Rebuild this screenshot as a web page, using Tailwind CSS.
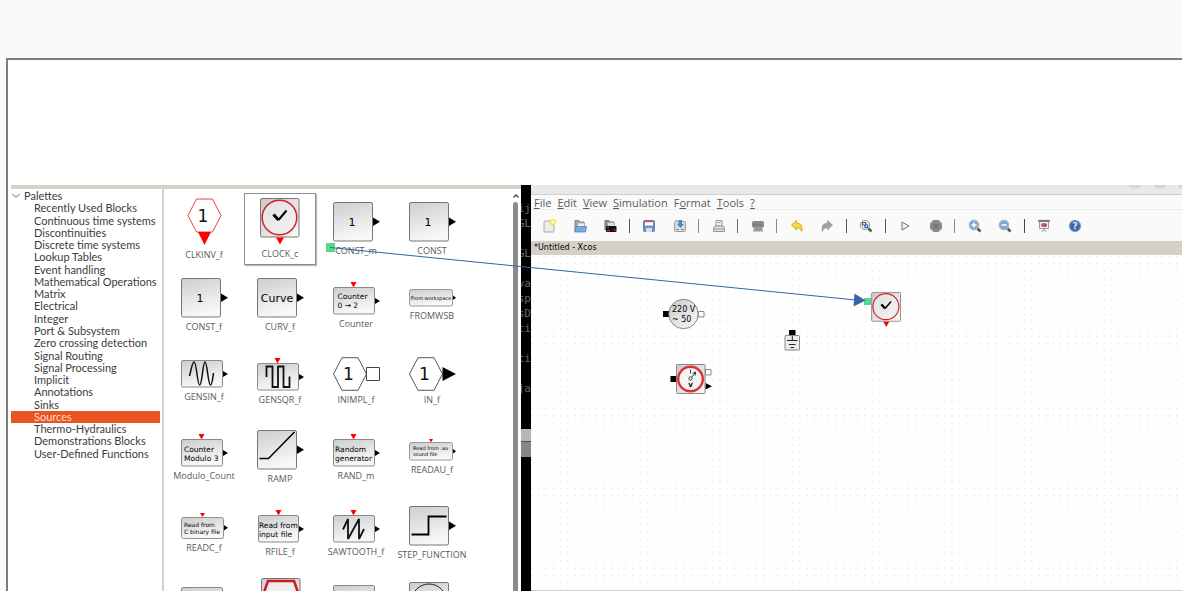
<!DOCTYPE html>
<html lang="en">
<head>
<meta charset="utf-8">
<title>Xcos</title>
<script src="https://cdn.jsdelivr.net/npm/@tailwindcss/browser@4"></script>
</head>
<body class="h-screen overflow-hidden bg-[#fafafa] pt-[58px] pl-[6px] font-['Open_Sans','Noto_Sans',sans-serif] text-[#3c3c3c]">

<!-- Shared paint and shapes -->
<svg class="absolute size-0" aria-hidden="true">
  <defs>
    <linearGradient id="face" x1="0" y1="0" x2="1" y2="1"><stop offset="0" stop-color="#c9c9c9"/><stop offset="1" stop-color="#fafafa"/></linearGradient>
    <linearGradient id="faceV" x1="0" y1="0" x2="0.3" y2="1"><stop offset="0" stop-color="#cdcdcd"/><stop offset="1" stop-color="#f8f8f8"/></linearGradient>
    <pattern id="dots" width="7.25" height="7.25" patternUnits="userSpaceOnUse"><rect x="0" y="1" width="1" height="1" fill="#dadada"/></pattern>
    <g id="box"><rect x="1.5" y=".5" width="39" height="38.5" rx="1.5" fill="url(#faceV)" stroke="#777"/><path d="M41 15.500l7 4.200-7 4.200z"/></g>
    <g id="low"><rect x="1.500" y=".5" width="41" height="26.500" rx="1.500" fill="url(#faceV)" stroke="#8a8a8a"/><path d="M43 11l5 3-5 3z"/></g>
    <path id="ev" d="M18.500 0h6l-3 5.500z" fill="#f00"/>
    <g id="clock"><rect x="1.500" y=".5" width="38.500" height="38.500" rx="1.500" fill="url(#face)" stroke="#777"/><circle cx="20.500" cy="19.500" r="17.300" fill="#f0f0f0" fill-opacity=".6" stroke="#d4202a" stroke-width="1.500"/><path d="M14.500 16.500l5 5.500" fill="none" stroke="#000" stroke-width="3"/><path d="M19.500 22l8-9.500" fill="none" stroke="#000" stroke-width="2"/><path d="M17 39.500h8l-4 7z" fill="#f00"/></g>
  </defs>
</svg>

<main class="relative flex h-full flex-col border-t-2 border-l-2 border-[#7d7d7d] bg-white pt-[125px] pl-[3px]">
  <div class="flex min-h-0 flex-1">

    <!-- Palette browser -->
    <section class="flex w-[510px] shrink-0 flex-col border-t-4 border-[#d6d0c8]">
      <div class="flex min-h-0 flex-1">
        <nav class="w-[153px] shrink-0 border-r-2 border-[#d2d2d2] pt-px font-['Lato','Noto_Sans',sans-serif] text-[11px] leading-[12px] whitespace-nowrap" aria-label="Palettes">
          <ul class="grid h-[270px] auto-rows-fr grid-cols-[minmax(0,1fr)]">
            <li class="flex items-center gap-[4px] pl-px"><svg class="h-[12px] w-[8px]" viewBox="0 0 8 12" fill="none" stroke="#666"><path d="M.5 4L4 7.500 7.500 4"/></svg><a href="#">Palettes</a></li>
            <li><a href="#" class="block pl-[23px]">Recently Used Blocks</a></li>
            <li><a href="#" class="block pl-[23px]">Continuous time systems</a></li>
            <li><a href="#" class="block pl-[23px]">Discontinuities</a></li>
            <li><a href="#" class="block pl-[23px]">Discrete time systems</a></li>
            <li><a href="#" class="block pl-[23px]">Lookup Tables</a></li>
            <li><a href="#" class="block pl-[23px]">Event handling</a></li>
            <li><a href="#" class="block pl-[23px]">Mathematical Operations</a></li>
            <li><a href="#" class="block pl-[23px]">Matrix</a></li>
            <li><a href="#" class="block pl-[23px]">Electrical</a></li>
            <li><a href="#" class="block pl-[23px]">Integer</a></li>
            <li><a href="#" class="block pl-[23px]">Port &amp; Subsystem</a></li>
            <li><a href="#" class="block pl-[23px]">Zero crossing detection</a></li>
            <li><a href="#" class="block pl-[23px]">Signal Routing</a></li>
            <li><a href="#" class="block pl-[23px]">Signal Processing</a></li>
            <li><a href="#" class="block pl-[23px]">Implicit</a></li>
            <li><a href="#" class="block pl-[23px]">Annotations</a></li>
            <li><a href="#" class="block pl-[23px]">Sinks</a></li>
            <li class="mr-[2px] bg-[#e95420] text-[#fbdcd0]"><a href="#" class="block pl-[23px]">Sources</a></li>
            <li><a href="#" class="block pl-[23px]">Thermo-Hydraulics</a></li>
            <li><a href="#" class="block pl-[23px]">Demonstrations Blocks</a></li>
            <li><a href="#" class="block pl-[23px]">User-Defined Functions</a></li>
          </ul>
        </nav>

        <div class="min-w-0 flex-1 overflow-hidden pt-[3px] pl-[2px]">
          <div class="grid auto-rows-[76px] grid-cols-[repeat(4,76px)] text-[9px] leading-[14px] text-[#5a5a5a]">
            <button class="flex flex-col items-center justify-center gap-[2px]"><svg class="h-[48px] w-[48px]" font-family="DejaVu Sans"><path d="M8 17.500L16.500 1h16L41 17.500 32.500 34h-16z" fill="#fff" stroke="#e8434a"/><path d="M18 34h13l-6.500 13z" fill="#f00"/><text x="17.500" y="24" font-size="17" fill="#111">1</text></svg><span>CLKINV_f</span></button>
            <button class="mx-[2px] mt-px mb-[3px] flex flex-col items-center justify-center gap-[3px] border border-[#8e8e8e] pt-px shadow-[1px_1px_1px_#bbb]"><svg class="h-[46px] w-[48px]"><g transform="translate(3)"><use href="#clock"/></g></svg><span>CLOCK_c</span></button>
            <button class="flex flex-col items-center justify-center gap-[2px]"><svg class="h-[40px] w-[48px]" font-family="DejaVu Sans"><use href="#box"/><text x="16.500" y="23.500" font-size="11">1</text></svg><span>CONST_m</span></button>
            <button class="flex flex-col items-center justify-center gap-[2px]"><svg class="h-[40px] w-[48px]" font-family="DejaVu Sans"><use href="#box"/><text x="16.500" y="23.500" font-size="11">1</text></svg><span>CONST</span></button>

            <button class="flex flex-col items-center justify-center gap-[2px]"><svg class="h-[40px] w-[48px]" font-family="DejaVu Sans"><use href="#box"/><text x="16.500" y="23.500" font-size="11">1</text></svg><span>CONST_f</span></button>
            <button class="flex flex-col items-center justify-center gap-[2px]"><svg class="h-[40px] w-[48px]" font-family="DejaVu Sans"><use href="#box"/><text x="21" y="23.500" font-size="11" text-anchor="middle">Curve</text></svg><span>CURV_f</span></button>
            <button class="flex flex-col items-center justify-center gap-[2px]"><svg class="h-[33px] w-[48px]" font-family="DejaVu Sans" font-size="7.500"><use href="#ev"/><use href="#low" y="5"/><text x="5.500" y="17">Counter</text><text x="5.500" y="26">0 → 2</text></svg><span>Counter</span></button>
            <button class="flex flex-col items-center justify-center gap-[2px]"><svg class="h-[18px] w-[48px]" font-family="DejaVu Sans" font-size="5"><rect x="1.500" y=".5" width="43" height="16.500" rx="2" fill="url(#faceV)" stroke="#9a9a9a"/><path d="M45 6.500l3 2.200-3 2.200z"/><text x="23" y="10.500" text-anchor="middle">From workspace</text></svg><span>FROMWSB</span></button>

            <button class="flex flex-col items-center justify-center gap-[2px]"><svg class="h-[28px] w-[48px]"><use href="#low"/><path d="M9.500 16C12 6 12.500 2 14 2c2.800 0 3.200 23 5.700 23s3-23 5.300-23 3 23 5.500 23c1.500 0 2-5 3-12" fill="none" stroke="#111" stroke-width="1.500"/></svg><span>GENSIN_f</span></button>
            <button class="flex flex-col items-center justify-center gap-[2px]"><svg class="h-[33px] w-[48px]"><use href="#ev"/><use href="#low" y="5"/><path d="M10.500 19V8.500h6V29h5.500V8.500h5.500V29h6V18.500" fill="none" stroke="#111" stroke-width="1.800"/></svg><span>GENSQR_f</span></button>
            <button class="flex flex-col items-center justify-center gap-[2px]"><svg class="h-[34px] w-[48px]" font-family="DejaVu Sans"><path d="M1.500 17L10 .7h16L34.500 17 26 33.300H10z" fill="#fff" stroke="#555"/><path d="M34.500 10.500h13v13h-13z" fill="#fff" stroke="#444"/><text x="11" y="23" font-size="17" fill="#111">1</text></svg><span>INIMPL_f</span></button>
            <button class="flex flex-col items-center justify-center gap-[2px]"><svg class="h-[34px] w-[48px]" font-family="DejaVu Sans"><path d="M1.500 17L10 .7h16L34.500 17 26 33.300H10z" fill="#fff" stroke="#555"/><path d="M34.500 10l13.500 7-13.500 7z"/><text x="11" y="23" font-size="17" fill="#111">1</text></svg><span>IN_f</span></button>

            <button class="flex flex-col items-center justify-center gap-[2px]"><svg class="h-[33px] w-[48px]" font-family="DejaVu Sans" font-size="7.500"><use href="#ev"/><use href="#low" y="5"/><text x="4" y="17.500">Counter</text><text x="4" y="26.500">Modulo 3</text></svg><span>Modulo_Count</span></button>
            <button class="flex flex-col items-center justify-center gap-[2px]"><svg class="h-[40px] w-[48px]"><use href="#box"/><path d="M3.500 28.500h9L38.500 2" fill="none" stroke="#000" stroke-width="1.500"/></svg><span>RAMP</span></button>
            <button class="flex flex-col items-center justify-center gap-[2px]"><svg class="h-[33px] w-[48px]" font-family="DejaVu Sans" font-size="7.500"><use href="#ev"/><use href="#low" y="5"/><text x="3" y="17.500">Random</text><text x="3" y="26.500">generator</text></svg><span>RAND_m</span></button>
            <button class="flex flex-col items-center justify-center gap-[2px]"><svg class="h-[22px] w-[48px]" font-family="DejaVu Sans" font-size="5"><path d="M21 0h4l-2 3.500z" fill="#f00"/><rect x="1.500" y="3.500" width="43" height="17.500" rx="2" fill="url(#faceV)" stroke="#9a9a9a"/><path d="M45 10l3 2.200-3 2.200z"/><text x="5" y="11">Read from .au</text><text x="5" y="17">sound file</text></svg><span>READAU_f</span></button>

            <button class="flex flex-col items-center justify-center gap-[2px]"><svg class="h-[26px] w-[48px]" font-family="DejaVu Sans" font-size="6"><path d="M20 0h5l-2.500 4z" fill="#f00"/><rect x="1.500" y="4.500" width="42" height="21" rx="2" fill="url(#faceV)" stroke="#8f8f8f"/><path d="M44 12l4 2.800-4 2.800z"/><text x="4" y="13.500">Read from</text><text x="4" y="21">C binary file</text></svg><span>READC_f</span></button>
            <button class="flex flex-col items-center justify-center gap-[2px]"><svg class="h-[33px] w-[48px]" font-family="DejaVu Sans" font-size="7.500"><use href="#ev" x="1"/><rect x="2.500" y="5.500" width="40" height="26.500" rx="1.500" fill="url(#faceV)" stroke="#8a8a8a"/><path d="M43 16l5 3-5 3z"/><text x="3" y="17.500">Read from</text><text x="3" y="26.500">input file</text></svg><span>RFILE_f</span></button>
            <button class="flex flex-col items-center justify-center gap-[2px]"><svg class="h-[33px] w-[48px]"><use href="#ev"/><use href="#low" y="5"/><path d="M11 19.500L16 9v20L27 9v20l5-10" fill="none" stroke="#111" stroke-width="1.800"/></svg><span>SAWTOOTH_f</span></button>
            <button class="flex flex-col items-center justify-center gap-[2px]"><svg class="h-[40px] w-[48px]"><use href="#box"/><path d="M3.500 28.500h17v-18h18" fill="none" stroke="#000" stroke-width="1.800"/></svg><span>STEP_FUNCTION</span></button>

            <button class="flex justify-center pt-[15px]" aria-label="Block"><svg class="h-[28px] w-[48px]"><use href="#low"/></svg></button>
            <button class="flex justify-center pt-[6px]" aria-label="Clock block"><svg class="h-[48px] w-[48px]"><g transform="translate(4)"><rect x="1.500" y=".5" width="38.500" height="38.500" rx="1.500" fill="url(#faceV)" stroke="#777"/><path d="M2 20L8 3h26l6 17" fill="#eee" stroke="#cc1a22" stroke-width="2.500"/></g></svg></button>
            <button class="flex justify-center pt-[13px]" aria-label="Block"><svg class="h-[33px] w-[48px]"><use href="#low"/></svg></button>
            <button class="flex justify-center pt-[10px]" aria-label="Time block"><svg class="h-[40px] w-[48px]"><use href="#box"/><circle cx="21" cy="19.500" r="17.500" fill="none" stroke="#222"/></svg></button>
          </div>
        </div>

        <div class="flex w-[11px] shrink-0 flex-col items-center gap-[3px] pt-[4px]">
          <svg class="h-[6px] w-[8px] shrink-0" viewBox="0 0 8 6" fill="none" stroke="#444" stroke-width="1.300"><path d="M1.500 4.500L4 2l2.500 2.500"/></svg>
          <div class="w-[5px] flex-1 rounded-t bg-[#8a8a8a]"></div>
        </div>
      </div>
    </section>

    <!-- Sliver of the terminal behind -->
    <section class="w-[10px] shrink-0 overflow-hidden bg-black pt-[16px] font-['DejaVu_Sans_Mono',monospace] text-[11px] leading-[15px] text-[#686868]">
      <div class="flex h-[228px] flex-col items-end">
        <p>ij</p><p>GL</p><p class="mt-[15px]">GL</p><p class="mt-[15px]">va</p><p>sp</p><p>sD</p><p>ti</p><p class="mt-[15px]">ti</p><p class="mt-[15px]">ja</p>
      </div>
      <div class="h-[13px] border-b border-[#555] bg-[#b9b6b9]"></div>
      <div class="h-[15px] bg-[#878787]"></div>
    </section>

    <!-- Diagram editor -->
    <section class="flex min-w-0 flex-1 flex-col">
      <header class="flex h-[10px] shrink-0 justify-end gap-[9px] overflow-hidden border-b border-[#cfcfcf] bg-[#e9e9e9]">
        <i class="-mt-[12px] size-[16px] rounded-full bg-[#d6d6d6]"></i><i class="-mt-[12px] size-[16px] rounded-full bg-[#d6d6d6]"></i><i class="-mt-[12px] -mr-[11px] size-[16px] rounded-full bg-[#d6d6d6]"></i>
      </header>
      <nav class="flex h-[15px] shrink-0 items-center gap-[6px] border-b border-[#ececec] bg-[#fafafa] pt-[2px] pl-[3px] text-[11px] leading-[14px] text-[#5a5a5a]">
        <button><u>F</u>ile</button><button><u>E</u>dit</button><button><u>V</u>iew</button><button><u>S</u>imulation</button><button>F<u>o</u>rmat</button><button><u>T</u>ools</button><button><u>?</u></button>
      </nav>
      <div class="h-[31px] shrink-0 overflow-hidden bg-[#fafafa] pl-[3px]">
        <div class="flex h-full w-[556px] items-center justify-between">
          <button class="flex w-[30px] justify-center" aria-label="New"><svg class="size-[14px]" viewBox="0 0 14 14"><rect x="2" y="2" width="10" height="11" rx="1" fill="#ededed" stroke="#aaa"/><circle cx="11" cy="3" r="2.500" fill="#fffbd0" stroke="#f2e43c" stroke-width="1.300"/></svg></button>
          <button class="flex w-[30px] justify-center" aria-label="Open"><svg class="size-[14px]" viewBox="0 0 14 14"><path d="M2 11V1.500h4l1 1.500h4v8z" fill="#a5a7a5" stroke="#888"/><path d="M4.500 4h7v5h-7z" fill="#eee" stroke="#999" stroke-width=".6"/><path d="M3 7.500h10.500L12.500 13H1.500z" fill="#7fa9dc" stroke="#5180bb" stroke-width=".8"/></svg></button>
          <button class="flex w-[30px] justify-center" aria-label="Open in Scilab"><svg class="size-[14px]" viewBox="0 0 14 14"><path d="M2 11V1.500h4l1 1.500h4v8z" fill="#8d8f8d" stroke="#777"/><path d="M4.500 3.500h7v4h-7z" fill="#ddd" stroke="#999" stroke-width=".6"/><rect x="3" y="7" width="10.500" height="6" rx="1" fill="#111"/><path d="M4 11.500h3M10.500 11h2" stroke="#d82020" stroke-width="1.500"/><path d="M4 8.500h2" stroke="#3358d8"/></svg></button>
          <i class="mr-[4px] ml-[3px] h-[14px] w-px bg-[#555]"></i>
          <button class="flex w-[30px] justify-center" aria-label="Save"><svg class="size-[14px]" viewBox="0 0 14 14"><rect x="1.500" y="1.500" width="11" height="11" rx="1" fill="#6d92c4" stroke="#5f7fa8"/><path d="M3 2h8v4.500H3z" fill="#fff"/><path d="M3 2.500h8" stroke="#dc5050" stroke-width="1.500"/><path d="M4 9h6v4H4z" fill="#d9dce0"/></svg></button>
          <button class="flex w-[30px] justify-center" aria-label="Save as"><svg class="size-[14px]" viewBox="0 0 14 14"><rect x="1.500" y="2.500" width="11" height="10" rx="1" fill="#ddd" stroke="#999"/><path d="M3 10.500h3M8 10.500h3" stroke="#888"/><path d="M5.500 1h3.500v4h2L7.500 9 4 5h1.500z" fill="#4d86b8"/><path d="M2 2h3" stroke="#a5bdd2" stroke-width="2"/></svg></button>
          <i class="mr-[4px] ml-[3px] h-[14px] w-px bg-[#888]"></i>
          <button class="flex w-[30px] justify-center" aria-label="Print"><svg class="size-[14px]" viewBox="0 0 14 14" fill="#eee" stroke="#999"><path d="M4 1.500h6V7H4z"/><path d="M2.500 7h9l1 2.500v3h-11v-3z" fill="#ddd"/><path d="M2 10h10M5.500 3.500h3"/></svg></button>
          <i class="mr-[4px] ml-[3px] h-[14px] w-px bg-[#666]"></i>
          <button class="flex w-[30px] justify-center" aria-label="Delete"><svg class="size-[14px]" viewBox="0 0 14 14"><rect x="1" y="2" width="12" height="6.500" rx="1.500" fill="#8b8b8b"/><path d="M3 8h8l1 5-2-1-1 1-2-1-2 1-1-1-2 1z" fill="#999"/><path d="M2 6h10" stroke="#777"/></svg></button>
          <i class="mr-[4px] ml-[3px] h-[14px] w-px bg-[#888]"></i>
          <button class="flex w-[30px] justify-center" aria-label="Undo"><svg class="size-[14px]" viewBox="0 0 14 14"><path d="M1.500 6L6.500 1.500v2.700c4.500 0 6.500 3.300 5 8.300-.5-2.500-2-3.700-5-3.700v2.200z" fill="#f3dd3a" stroke="#cfa51c" stroke-width=".9"/></svg></button>
          <button class="flex w-[30px] justify-center" aria-label="Redo"><svg class="size-[14px]" viewBox="0 0 14 14"><path d="M12.500 6L7.500 1.500v2.700c-4.500 0-6.500 3.300-5 8.300.5-2.500 2-3.700 5-3.700v2.200z" fill="#a0a0a0" stroke="#8d8d8d" stroke-width=".6"/></svg></button>
          <i class="mr-[4px] ml-[3px] h-[14px] w-px bg-[#555]"></i>
          <button class="flex w-[30px] justify-center" aria-label="Fit diagram"><svg class="size-[14px]" viewBox="0 0 14 14"><path d="M9 9l3.500 3.500" stroke="#555" stroke-width="2.500"/><circle cx="6" cy="6" r="4.700" fill="#dbe7f5" stroke="#9a9c9c"/><path d="M3.500 3.500h3v2.500h-3zM6 6h2.500v2.500H6z" fill="#fff" stroke="#2f5fa5" stroke-width="1.200"/></svg></button>
          <i class="mr-[4px] ml-[3px] h-[14px] w-px bg-[#555]"></i>
          <button class="flex w-[30px] justify-center" aria-label="Start"><svg class="size-[14px]" viewBox="0 0 14 14"><path d="M4 3l7 4-7 4z" fill="#f2f2f2" stroke="#777"/></svg></button>
          <button class="flex w-[30px] justify-center" aria-label="Stop"><svg class="size-[14px]" viewBox="0 0 14 14"><path d="M4.500 1h5L13 4.500v5L9.500 13h-5L1 9.500v-5z" fill="#8a8a8a"/><path d="M5 5l4 4M9 5L5 9" stroke="#707070" stroke-width="1.300"/></svg></button>
          <i class="mr-[4px] ml-[3px] h-[14px] w-px bg-[#888]"></i>
          <button class="flex w-[30px] justify-center" aria-label="Zoom in"><svg class="size-[14px]" viewBox="0 0 14 14"><path d="M9 9l3.500 3.500" stroke="#555" stroke-width="2.500"/><circle cx="6" cy="6" r="4.700" fill="#77a7dc" stroke="#b5b7b7" stroke-width="1.400"/><path d="M6 3.500v5M3.500 6h5" stroke="#fff" stroke-width="1.600"/></svg></button>
          <button class="flex w-[30px] justify-center" aria-label="Zoom out"><svg class="size-[14px]" viewBox="0 0 14 14"><path d="M9 9l3.500 3.500" stroke="#555" stroke-width="2.500"/><circle cx="6" cy="6" r="4.700" fill="#77a7dc" stroke="#b5b7b7" stroke-width="1.400"/><path d="M3.500 6h5" stroke="#fff" stroke-width="1.600"/></svg></button>
          <i class="mr-[4px] ml-[3px] h-[14px] w-px bg-[#444]"></i>
          <button class="flex w-[30px] justify-center" aria-label="Demonstrations"><svg class="size-[14px]" viewBox="0 0 14 14"><path d="M2.500 2.500h9v7h-9z" fill="#eee" stroke="#999"/><path d="M1 1.800h12" stroke="#777" stroke-width="1.800"/><ellipse cx="7" cy="6" rx="3" ry="2" fill="#df5348"/><path d="M7 6h3a3 2 0 0 1-2 1.800z" fill="#3a66bd"/><path d="M7 10v2M4.500 13L7 10.500 9.500 13" fill="none" stroke="#999"/></svg></button>
          <button class="flex w-[30px] justify-center" aria-label="Help"><svg class="size-[14px]" viewBox="0 0 14 14"><circle cx="7" cy="7" r="5.500" fill="#3b66a8" stroke="#7f9ac6" stroke-width="1.300"/><text x="7" y="10.300" font-family="DejaVu Sans" font-size="9" font-weight="bold" fill="#e4ecf7" text-anchor="middle">?</text></svg></button>
        </div>
      </div>
      <h1 class="h-[14px] shrink-0 bg-[#d4cfc7] pl-[3px] font-['DejaVu_Sans'] text-[8px] leading-[14px] text-black">*Untitled - Xcos</h1>
      <div class="min-h-0 flex-1 border-b border-[#cfcfcf] bg-white">
        <svg class="size-full" font-family="DejaVu Sans">
          <rect width="100%" height="100%" fill="url(#dots)"/>
          <!-- Voltage source -->
          <path d="M132 56h6.500v6H132z"/><path d="M167.500 56.500h5.500v5.500h-5.500z" fill="#fff" stroke="#888"/>
          <circle cx="152.500" cy="59" r="14.700" fill="url(#face)" stroke="#888"/><text x="141" y="57" font-size="8">220 V</text><text x="141" y="67" font-size="8">~ 50</text>
          <!-- Ground -->
          <path d="M258 75h6.500v5.500H258z"/><rect x="254" y="80.500" width="14.500" height="14.500" rx="1" fill="#ececec" stroke="#888"/><path d="M261.300 81v4.500M256 85.500h10.500M258 89.500h6.500M259.500 92.500h3.500" stroke="#222"/>
          <!-- Voltmeter -->
          <path d="M139.500 121h6v6h-6z"/><path d="M174.500 114.500h5.500v5.500h-5.500z" fill="#fff" stroke="#888"/><path d="M174.500 128l6.500 3.300-6.500 3.300z"/>
          <rect x="145.500" y="109.500" width="28.500" height="29" rx="1" fill="url(#face)" stroke="#888"/><circle cx="159.500" cy="124" r="12.300" fill="#f4f4f4" stroke="#df2f32" stroke-width="2.400"/>
          <circle cx="159.500" cy="123.500" r="1.700" fill="none" stroke="#222" stroke-width=".8"/><path d="M160.700 122.300l3.500-4.500M161.500 118.500l3-1.500-.3 3.500M159.500 114.500v4" stroke="#222" stroke-width=".9" fill="none"/><text x="159.500" y="132" font-size="6" font-weight="bold" text-anchor="middle">V</text>
          <!-- Clock -->
          <g transform="translate(339.500 37) scale(.75)"><use href="#clock"/></g>
        </svg>
      </div>
    </section>
  </div>

  <!-- Drag path from the palette to the diagram -->
  <svg class="pointer-events-none absolute inset-0 size-full" aria-hidden="true">
    <rect x="318" y="183" width="9" height="9" fill="#57d88c"/>
    <rect x="856" y="238" width="7" height="7" fill="#57d88c"/>
    <path d="M322 187.500L848 240" stroke="#3465a4" fill="none"/>
    <path d="M846.500 233.500l11 7-12 6z" fill="#3465a4"/>
  </svg>
</main>
</body>
</html>
